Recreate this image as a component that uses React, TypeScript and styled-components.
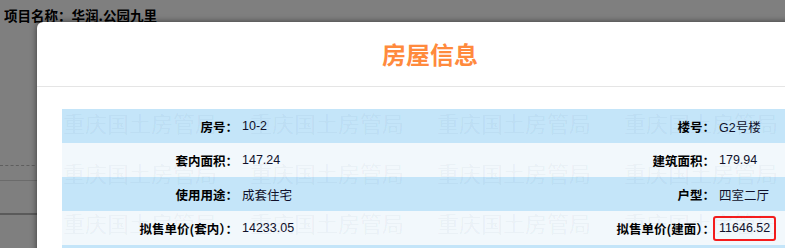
import React from 'react';
import styled, { createGlobalStyle } from 'styled-components';

// 房屋信息弹窗 (背景页被遮罩成灰色)

const GlobalStyle = createGlobalStyle`
  html, body { margin: 0; padding: 0; }
  body {
    background: #7f7f7f;
    font-family: "Noto Sans CJK SC", "Liberation Sans", sans-serif;
    overflow: hidden;
  }
`;

type Field = { label: string; value: string; highlight?: boolean };

const rows: [Field, Field][] = [
  [{ label: '房号：', value: '10-2' }, { label: '楼号：', value: 'G2号楼' }],
  [{ label: '套内面积：', value: '147.24' }, { label: '建筑面积：', value: '179.94' }],
  [{ label: '使用用途：', value: '成套住宅' }, { label: '户型：', value: '四室二厅' }],
  [
    { label: '拟售单价(套内）：', value: '14233.05' },
    { label: '拟售单价(建面）：', value: '11646.52', highlight: true },
  ],
  [{ label: '', value: '' }, { label: '', value: '' }],
];

const App: React.FC = () => {
  return (
    <Page>
      <GlobalStyle />
      <ProjectName>项目名称：华润.公园九里</ProjectName>
      <Rule $top={141} $kind="dashed" $color="#5e5e5e" />
      <Rule $top={14} $kind="solid" $color="#6b6b6b" />
      <Rule $top={32} $kind="solid" $color="#5a5a5a" $weight={2} />

      <Dialog>
        <DialogHeader>
          <Title>房屋信息</Title>
        </DialogHeader>
        <DialogBody>
          <TableWrap>
            <InfoTable>
              <colgroup>
                <col style={{ width: 176 }} />
                <col style={{ width: 240 }} />
                <col style={{ width: 237 }} />
                <col style={{ width: 83 }} />
              </colgroup>
              <tbody>
                {rows.map((r, i) => (
                  <Row key={i} $alt={i % 2 === 1}>
                    {r.map((f, j) => (
                      <React.Fragment key={j}>
                        <LabelCell>{f.label}</LabelCell>
                        <ValueCell>
                          {f.highlight ? <Boxed>{f.value}</Boxed> : f.value}
                        </ValueCell>
                      </React.Fragment>
                    ))}
                  </Row>
                ))}
              </tbody>
            </InfoTable>
            <Watermark aria-hidden="true">
              {Array.from({ length: 12 }).map((_, i) => (
                <Mark key={i}>重庆国土房管局</Mark>
              ))}
            </Watermark>
          </TableWrap>
        </DialogBody>
      </Dialog>
    </Page>
  );
};

export default App;

const Page = styled.div`
  position: relative;
  width: 785px;
  height: 248px;
  overflow: hidden;
  background: #7f7f7f;
`;

const ProjectName = styled.div`
  padding: 6px 0 0 4px;
  height: 18px;
  font-size: 13.5px;
  font-weight: 700;
  line-height: 18px;
  color: #000;
`;

const Rule = styled.div<{ $top: number; $kind: 'dashed' | 'solid'; $color: string; $weight?: number }>`
  width: 40px;
  margin-top: ${(p) => p.$top}px;
  border-top: ${(p) => p.$weight ?? 1}px ${(p) => p.$kind} ${(p) => p.$color};
`;

const Dialog = styled.section`
  position: absolute;
  left: 37px;
  top: 22px;
  width: 786px;
  height: 280px;
  background: #fff;
  border-radius: 6px 6px 0 0;
  box-shadow: 0 0 6px rgba(0, 0, 0, 0.55);
`;

const DialogHeader = styled.header`
  height: 64px;
  display: flex;
  align-items: center;
  justify-content: center;
  border-bottom: 1px solid #e5e5e5;
`;

const Title = styled.h2`
  margin: 0;
  font-size: 24px;
  font-weight: 700;
  line-height: 30px;
  color: #ff8a3d;
`;

const DialogBody = styled.div`
  padding: 22px 25px 0 25px;
`;

const TableWrap = styled.div`
  position: relative;
  width: 736px;
`;

const InfoTable = styled.table`
  width: 736px;
  table-layout: fixed;
  border-collapse: collapse;
  border-spacing: 0;
`;

const Row = styled.tr<{ $alt: boolean }>`
  height: 34px;
  background: ${(p) => (p.$alt ? '#f2f8fc' : '#c4e5f9')};
`;

const LabelCell = styled.td`
  padding: 0;
  text-align: right;
  font-size: 12.5px;
  font-weight: 700;
  color: #000;
  white-space: nowrap;
`;

const ValueCell = styled.td`
  padding: 0 0 0 4px;
  font-family: "Liberation Sans", "Noto Sans CJK SC", sans-serif;
  font-size: 12.5px;
  color: #10102a;
  white-space: nowrap;
`;

const Boxed = styled.span`
  display: inline-block;
  margin-left: -6px;
  padding: 3px 4px;
  line-height: 15px;
  border: 2px solid #f51c1c;
  border-radius: 3px;
`;

const Watermark = styled.div`
  position: absolute;
  top: 0;
  left: 0;
  right: 0;
  bottom: 0;
  padding: 1px 0 0 1px;
  display: grid;
  grid-template-columns: repeat(4, 187px);
  grid-auto-rows: 50px;
  overflow: hidden;
  pointer-events: none;
`;

const Mark = styled.span`
  font-size: 22px;
  line-height: 24px;
  font-weight: 400;
  color: rgba(0, 30, 80, 0.05);
  white-space: nowrap;
`;
